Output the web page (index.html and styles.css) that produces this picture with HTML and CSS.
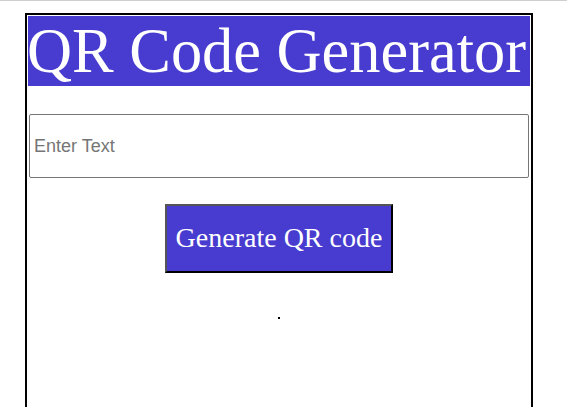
FILE: index.html
```html
<!DOCTYPE html>
<html>
<head>
<meta charset="utf-8">
<link rel="stylesheet" href="styles.css">
</head>
<body>
<div class="topline"></div>
<div class="box">
  <h1 class="title">QR Code Generator</h1>
  <input class="field" type="text" placeholder="Enter Text">
  <button class="gen">Generate QR code</button>
  <div class="qr"></div>
</div>
</body>
</html>
```

FILE: styles.css
```css
html, body {
  margin: 0;
  padding: 0;
  background: #fff;
  overflow: hidden;
}
.topline {
  height: 1px;
  background: #cfcfcf;
}
.box {
  margin: 12px 0 0 25px;
  width: 502px;
  min-height: 430px;
  border: 2px solid #000;
  padding: 1px;
  display: flex;
  flex-direction: column;
  align-items: center;
}
.title {
  align-self: stretch;
  margin: 0;
  background: #473ccf;
  color: #fff;
  font-family: "Liberation Serif", "Times New Roman", serif;
  font-weight: normal;
  font-size: 62.4px;
  line-height: 70px;
  text-indent: -1px;
  white-space: nowrap;
}
.field {
  box-sizing: border-box;
  margin-top: 28px;
  width: 500px;
  height: 64px;
  border: 1px solid #767676;
  border-radius: 2px;
  padding: 0 4px;
  font-family: "Liberation Sans", Arial, sans-serif;
  font-size: 18px;
  color: #000;
}
.field::placeholder {
  color: #757575;
}
.gen {
  margin-top: 26px;
  background: #473ccf;
  color: #fff;
  border: 2px solid;
  border-color: #555 #000 #000 #555;
  font-family: "Liberation Serif", "Times New Roman", serif;
  font-size: 28px;
  line-height: 32px;
  padding: 16px 9px 17px;
}
.qr {
  margin-top: 44px;
  width: 2px;
  height: 2px;
  background: #000;
}
```
